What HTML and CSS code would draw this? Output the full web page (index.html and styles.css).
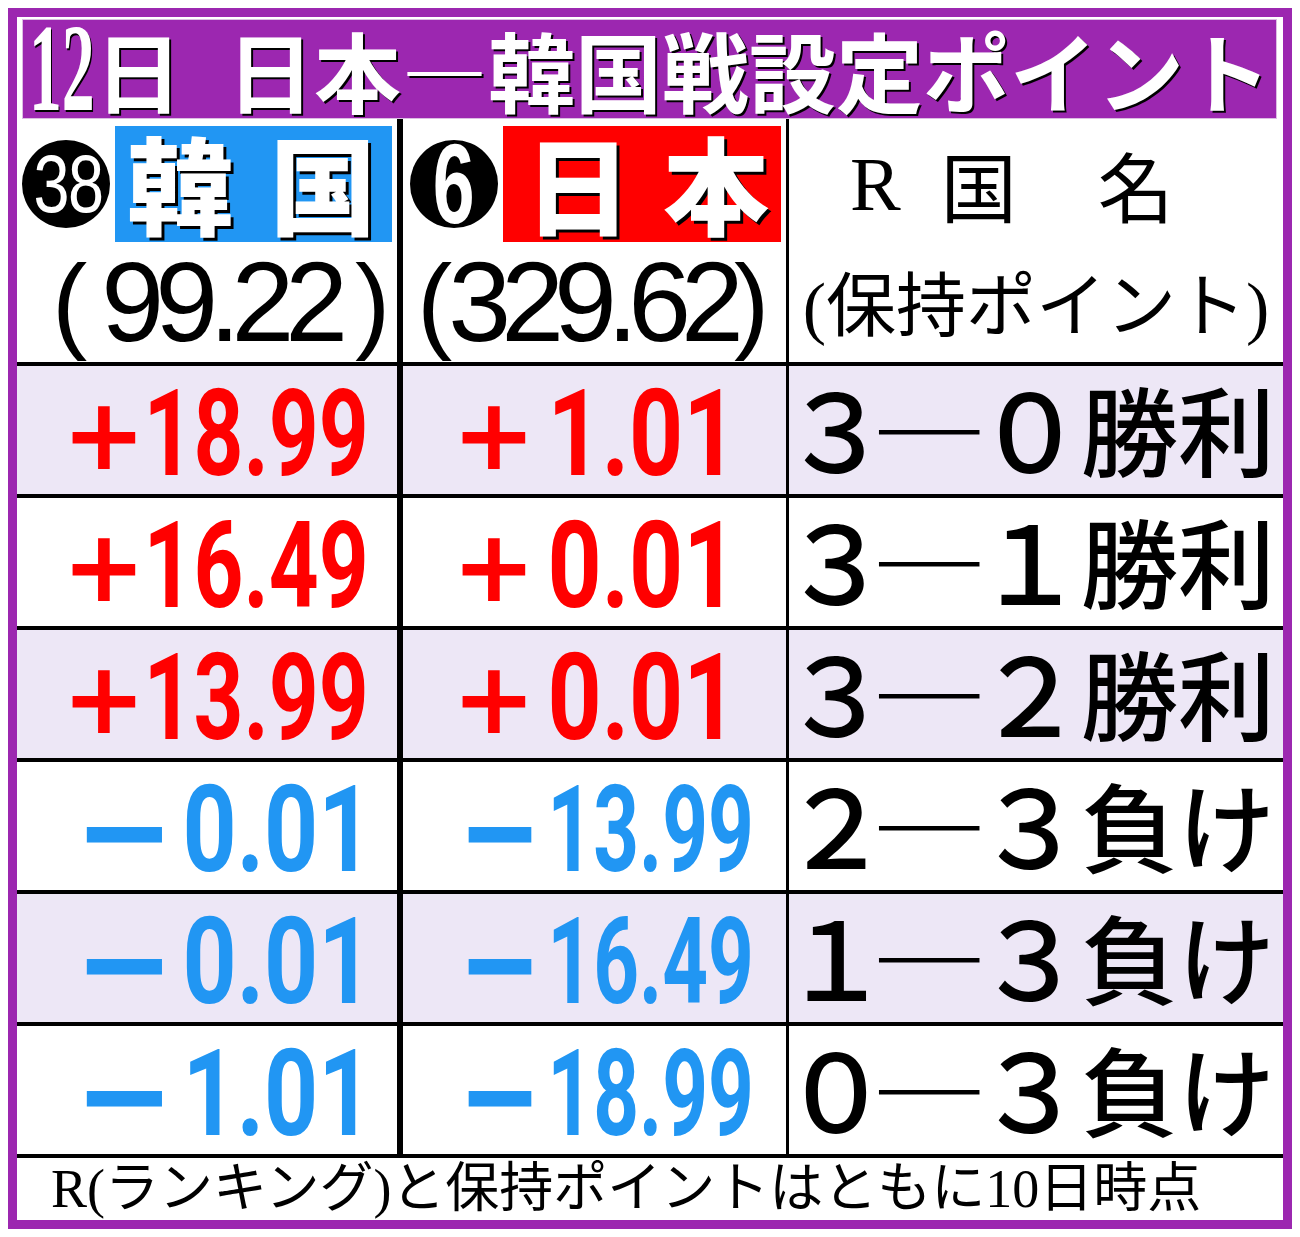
FILE: index.html
```html
<!DOCTYPE html>
<html lang="ja">
<head>
<meta charset="utf-8">
<title>12日 日本―韓国戦設定ポイント</title>
<link rel="stylesheet" href="styles.css">
</head>
<body>
<div class="frame">
  <div class="title">
    <span class="t-num">12</span><span class="t-jp">日</span><span class="t-sp"></span><span class="t-jp">日本―韓国戦設定ポイント</span>
  </div>
  <div class="table">
    <div class="row head">
      <div class="cell c1 hcell">
        <div class="hline">
          <span class="badge"><span class="b38">38</span></span>
          <span class="team kor"><span>韓</span><span>国</span></span>
        </div>
        <div class="pline">
          <span class="paren">(</span><span class="pts">99.22</span><span class="paren close">)</span>
        </div>
      </div>
      <div class="cell c2 hcell">
        <div class="hline">
          <span class="badge"><span class="b6">6</span></span>
          <span class="team jpn"><span>日</span><span>本</span></span>
        </div>
        <div class="pline">
          <span class="paren">(</span><span class="pts">329.62</span><span class="paren close">)</span>
        </div>
      </div>
      <div class="cell c3 hcell">
        <div class="rline"><span class="r">R</span><span class="k">国</span><span class="k k2">名</span></div>
        <div class="kline">(保持ポイント)</div>
      </div>
    </div>

    <div class="row data alt">
      <div class="cell c1 v pos red"><span class="sign">+</span><span class="num">18.99</span></div>
      <div class="cell c2 v pos red"><span class="sign">+</span><span class="num">1.01</span></div>
      <div class="cell c3 res"><span class="fd">３</span><span class="dash">―</span><span class="fd">０</span><span class="wd">勝利</span></div>
    </div>
    <div class="row data">
      <div class="cell c1 v pos red"><span class="sign">+</span><span class="num">16.49</span></div>
      <div class="cell c2 v pos red"><span class="sign">+</span><span class="num">0.01</span></div>
      <div class="cell c3 res"><span class="fd">３</span><span class="dash">―</span><span class="fd">１</span><span class="wd">勝利</span></div>
    </div>
    <div class="row data alt">
      <div class="cell c1 v pos red"><span class="sign">+</span><span class="num">13.99</span></div>
      <div class="cell c2 v pos red"><span class="sign">+</span><span class="num">0.01</span></div>
      <div class="cell c3 res"><span class="fd">３</span><span class="dash">―</span><span class="fd">２</span><span class="wd">勝利</span></div>
    </div>
    <div class="row data">
      <div class="cell c1 v neg blue"><span class="sign">−</span><span class="num">0.01</span></div>
      <div class="cell c2 v neg blue"><span class="sign">−</span><span class="num">13.99</span></div>
      <div class="cell c3 res"><span class="fd">２</span><span class="dash">―</span><span class="fd">３</span><span class="wd">負け</span></div>
    </div>
    <div class="row data alt">
      <div class="cell c1 v neg blue"><span class="sign">−</span><span class="num">0.01</span></div>
      <div class="cell c2 v neg blue"><span class="sign">−</span><span class="num">16.49</span></div>
      <div class="cell c3 res"><span class="fd">１</span><span class="dash">―</span><span class="fd">３</span><span class="wd">負け</span></div>
    </div>
    <div class="row data">
      <div class="cell c1 v neg blue"><span class="sign">−</span><span class="num">1.01</span></div>
      <div class="cell c2 v neg blue"><span class="sign">−</span><span class="num">18.99</span></div>
      <div class="cell c3 res"><span class="fd">０</span><span class="dash">―</span><span class="fd">３</span><span class="wd">負け</span></div>
    </div>

    <div class="foot">R(ランキング)と保持ポイントはともに10日時点</div>
  </div>
</div>
</body>
</html>
```

FILE: styles.css
```css
* { box-sizing: border-box; }

body {
  margin: 0;
  background: #fff;
  color: #000;
  font-family: "Noto Sans CJK JP", sans-serif;
}

.frame {
  margin: 8px;
  width: 1284px;
  height: 1221px;
  border: 9px solid #9c27b0;
  display: flex;
  flex-direction: column;
}

/* ---------- title ---------- */
.title {
  margin: 2px 6px 0 5px;
  height: 100px;
  background: #9c27b0;
  border: 1px solid #dcbde3;
  display: flex;
  align-items: center;
  padding-left: 6px;
  color: #fff;
  text-shadow: 2px 2px 0 #000;
  white-space: nowrap;
}
.t-num {
  font: 700 124px/1 "Liberation Serif", serif;
  display: inline-block;
  transform: scaleX(0.53);
  transform-origin: left center;
  margin-right: -58px;
}
.t-jp {
  font: 700 87px/1 "Noto Sans CJK JP", sans-serif;
}
.t-sp {
  flex: none;
  width: 45px;
}

/* ---------- table ---------- */
.table {
  display: flex;
  flex-direction: column;
}
.row {
  display: grid;
  grid-template-columns: 380px 389px 497px;
}
.row.data {
  height: 132px;
  border-top: 4px solid #000;
}
.row.alt { background: #ede7f6; }
.row.head { height: 243px; }

.cell.c2 { border-left: 6px solid #000; }
.cell.c3 { border-left: 3px solid #000; }

/* header */
.hcell {
  display: flex;
  flex-direction: column;
}
.hline {
  height: 123px;
  padding-top: 7px;
  display: flex;
  align-items: center;
  gap: 5px;
}
.c1 .hline { padding-left: 5px; }
.c2 .hline { padding-left: 7px; }

.badge {
  flex: none;
  width: 88px;
  height: 88px;
  border-radius: 50%;
  background: #000;
  color: #fff;
  display: flex;
  align-items: center;
  justify-content: center;
}
.b38 {
  display: inline-block;
  font: 400 81px/1 "Liberation Sans", sans-serif;
  transform: scaleX(0.8);
  letter-spacing: -2px;
  margin-left: 4px;
}
.b6 {
  display: inline-block;
  font: 700 114px/1 "Liberation Sans", sans-serif;
  transform: scaleX(0.66);
}

.team {
  height: 116px;
  display: flex;
  align-items: center;
  justify-content: space-between;
  padding: 0 14px 6px 14px;
  color: #fff;
  font: 900 106px/1 "Noto Sans CJK JP", sans-serif;
  text-shadow: 3px 3px 0 #000;
}
.team.kor { width: 277px; background: #2196f3; padding-left: 12px; padding-right: 16px; }
.team.jpn { width: 278px; background: #ff0000; padding-left: 22px; padding-right: 12px; }

.pline {
  height: 120px;
  display: flex;
  align-items: center;
  font-family: "Liberation Sans", sans-serif;
}
.paren {
  font-size: 106px;
  line-height: 1;
  font-weight: 400;
}
.pts {
  font-size: 113px;
  line-height: 1;
  letter-spacing: -9px;
}
.c1 .pline { padding-left: 35px; }
.c1 .pts { margin-left: 14px; }
.c1 .close { margin-left: 16px; }
.c2 .pline { padding-left: 14px; }
.c2 .pts { margin-left: -4px; letter-spacing: -10px; }
.c2 .close { margin-left: 0; }

.rline {
  height: 123px;
  padding: 7px 0 0 61px;
  display: flex;
  align-items: center;
  font-size: 76px;
  line-height: 1;
}
.rline .r { font-family: "Liberation Serif", serif; }
.rline .k { font-family: "Noto Sans CJK JP", sans-serif; font-weight: 400; margin-left: 40px; }
.rline .k2 { margin-left: 81px; }

.kline {
  height: 120px;
  padding-top: 12px;
  display: flex;
  align-items: center;
  justify-content: center;
  font: 400 70px/1 "Liberation Serif", "Noto Sans CJK JP", serif;
  white-space: nowrap;
}

/* data */
.v {
  display: flex;
  justify-content: space-between;
  align-items: center;
  padding-top: 8px;
}
.red { color: #ff0000; }
.blue { color: #2196f3; }
.sign {
  flex: none;
  display: inline-block;
  font: 700 100px/1 "DejaVu Sans", sans-serif;
  transform-origin: left center;
}
.neg .sign { transform: scaleY(1.35); }
.c1.neg .sign { transform: scale(1.2, 1.35); }
.num {
  flex: none;
  display: inline-block;
  margin-left: -300px;
  font: 700 121px/1 Roboto, sans-serif;
  transform: scaleX(0.72);
  transform-origin: right center;
}
.c1.neg .num, .c2.pos .num { transform: scaleX(0.78); }
.c2.neg .num { transform: scaleX(0.66); }

.c1.pos { padding-left: 45px; padding-right: 28px; }
.c1.neg { padding-left: 57px; padding-right: 25px; }
.c2.pos { padding-left: 49px; padding-right: 49px; }
.c2.neg { padding-left: 55px; padding-right: 32px; }

.res {
  display: flex;
  align-items: center;
  padding-bottom: 8px;
  font: 500 97px/1 "Noto Sans CJK JP", sans-serif;
  white-space: nowrap;
}
.res .fd {
  flex: none;
  width: 97px;
  text-align: center;
  font-size: 108px;
  line-height: 0.9;
}
.res .dash {
  flex: none;
  display: inline-block;
  width: 97px;
  text-align: center;
  font-size: 100px;
  font-weight: 700;
  line-height: 0.9;
  transform: scaleX(1.18);
}
.res .wd { line-height: 0.9; margin-left: 8px; }
.res .fd:first-child { margin-left: -7px; }

/* footer */
.foot {
  height: 66px;
  border-top: 4px solid #000;
  padding-left: 34px;
  font: 400 54px/62px "Liberation Serif", "Noto Sans CJK JP", serif;
  white-space: nowrap;
}
```
